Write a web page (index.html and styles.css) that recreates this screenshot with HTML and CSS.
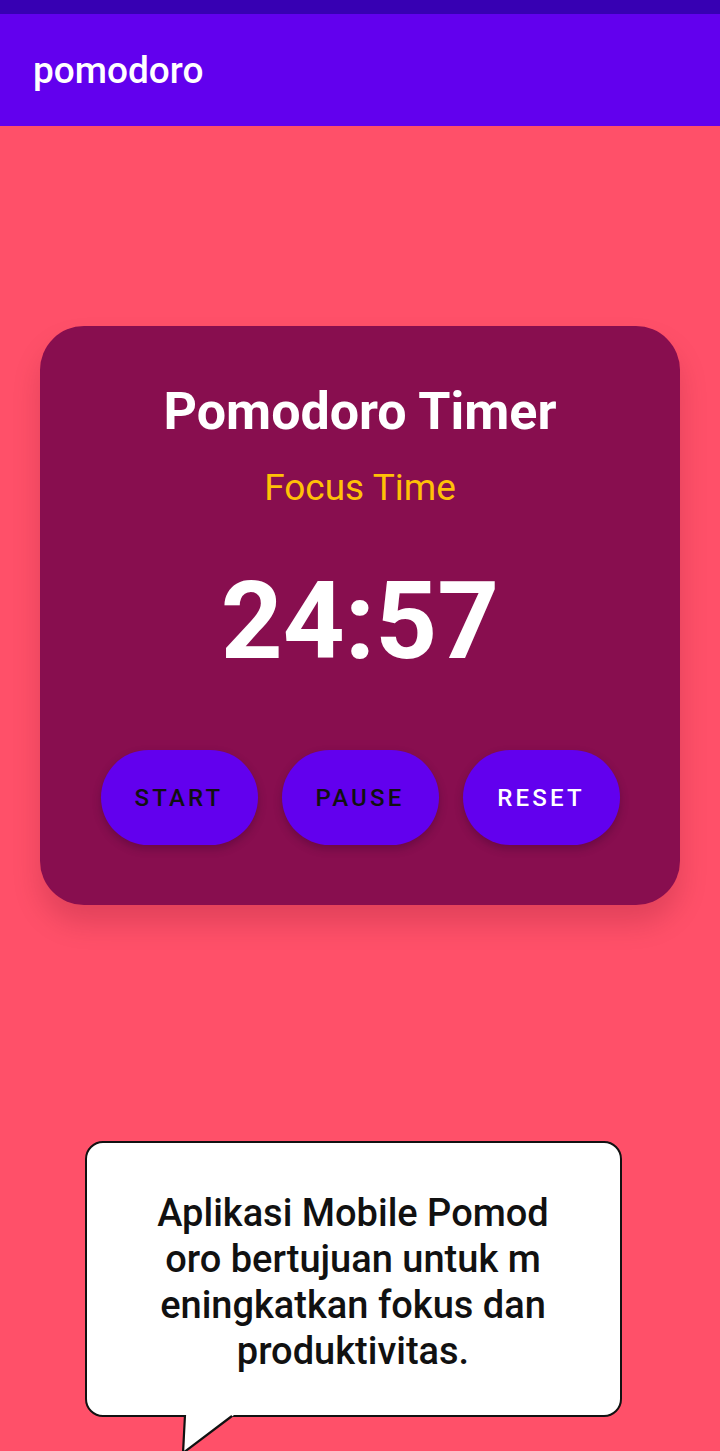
FILE: index.html
```html
<!DOCTYPE html>
<html lang="id">
<head>
<meta charset="utf-8">
<title>pomodoro</title>
<link rel="stylesheet" href="styles.css">
</head>
<body>
  <div class="status-bar"></div>
  <header class="app-bar">
    <h1 class="app-title">pomodoro</h1>
  </header>
  <main class="content">
    <section class="card">
      <h2 class="card-title">Pomodoro Timer</h2>
      <p class="mode">Focus Time</p>
      <p class="timer">24:57</p>
      <div class="buttons">
        <button class="btn btn-dark">START</button>
        <button class="btn btn-dark">PAUSE</button>
        <button class="btn btn-light">RESET</button>
      </div>
    </section>
    <div class="bubble">
      <p class="bubble-text">
        <span class="line">Aplikasi Mobile Pomod</span>
        <span class="line">oro bertujuan untuk m</span>
        <span class="line">eningkatkan fokus dan</span>
        <span class="line">produktivitas.</span>
      </p>
      <svg class="tail" width="60" height="40" viewBox="0 0 60 40">
        <polygon points="4,0 3,38 53,0" fill="#ffffff"/>
        <polyline points="4,0 2,38 51,1" fill="none" stroke="#111111" stroke-width="2.2" stroke-linejoin="miter"/>
      </svg>
    </div>
  </main>
</body>
</html>
```
FILE: styles.css
```css
* { box-sizing: border-box; }
html, body { margin: 0; padding: 0; }
body {
  width: 720px;
  height: 1451px;
  overflow: hidden;
  background: #ff5069;
  font-family: Roboto, "Noto Sans", "Liberation Sans", sans-serif;
}
.status-bar {
  height: 14px;
  background: #3700b3;
}
.app-bar {
  height: 112px;
  background: #6200ee;
  display: flex;
  align-items: center;
  padding-left: 33px;
}
.app-title {
  margin: 0;
  color: #ffffff;
  font-size: 37px;
  font-weight: 500;
  padding-bottom: 0;
}
.content {
  display: flex;
  flex-direction: column;
  align-items: center;
  padding-top: 200px;
}
.card {
  width: 640px;
  height: 579px;
  background: #880e4f;
  border-radius: 44px;
  box-shadow: 0 18px 28px rgba(90, 0, 30, 0.18);
  display: flex;
  flex-direction: column;
  align-items: center;
  padding-top: 56px;
}
.card-title {
  margin: 0;
  color: #ffffff;
  font-size: 52px;
  font-weight: 700;
  line-height: 60px;
}
.mode {
  margin: 24px 0 0;
  color: #ffc107;
  font-size: 37px;
  line-height: 44px;
}
.timer {
  margin: 51px 0 0;
  color: #ffffff;
  font-size: 108px;
  font-weight: 700;
  line-height: 120px;
}
.buttons {
  display: flex;
  gap: 24px;
  margin-top: 69px;
}
.btn {
  width: 157px;
  height: 95px;
  border: none;
  border-radius: 48px;
  background: #6200ee;
  box-shadow: 0 4px 8px rgba(40, 0, 40, 0.3);
  font-family: Roboto, "Noto Sans", "Liberation Sans", sans-serif;
  font-size: 24px;
  font-weight: 500;
  letter-spacing: 3.2px;
  padding: 0;
}
.btn-dark { color: #111111; }
.btn-light { color: #ffffff; }
.bubble {
  position: relative;
  width: 537px;
  height: 276px;
  margin-top: 236px;
  margin-left: -14px;
  background: #ffffff;
  border: 2px solid #111111;
  border-radius: 18px;
  display: flex;
  align-items: center;
  justify-content: center;
  padding-top: 6px;
}
.bubble-text {
  margin: 0;
  text-align: center;
  font-size: 38px;
  font-weight: 500;
  line-height: 46px;
  color: #111111;
}
.line { display: block; }
.tail {
  position: absolute;
  left: 94px;
  top: 272px;
}
```
